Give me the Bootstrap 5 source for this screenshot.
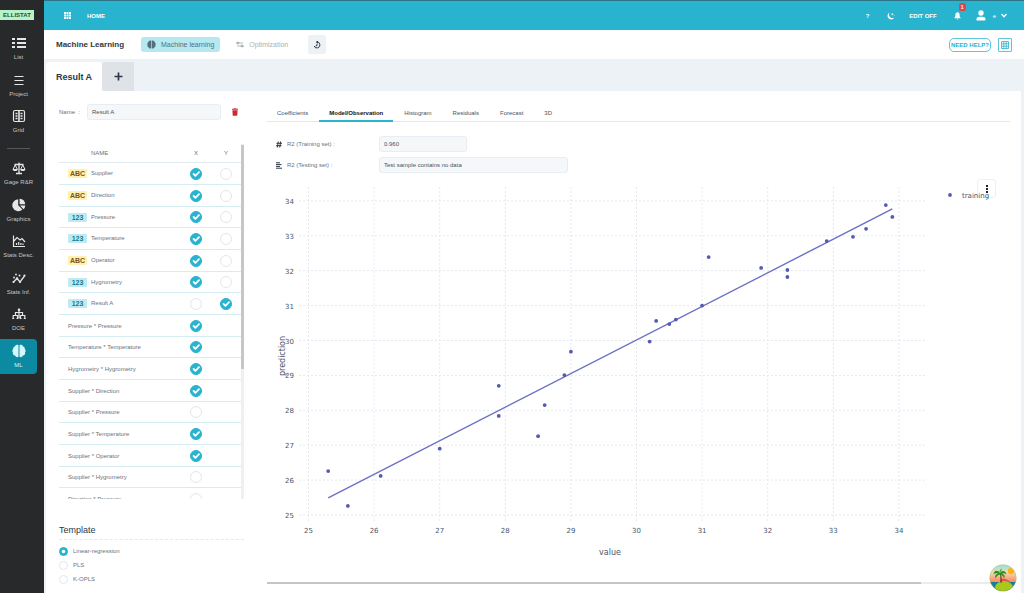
<!DOCTYPE html>
<html lang="en">
<head>
<meta charset="utf-8">
<meta name="viewport" content="width=device-width, initial-scale=1">
<title>Ellistat - Machine Learning</title>
<link href="https://cdn.jsdelivr.net/npm/bootstrap@5.3.0/dist/css/bootstrap.min.css" rel="stylesheet">
<style>
:root{--brand:#28b3cf;--band:#edf2f7;--ink:#2d3748;--soft:#6b7280;--line:#e2e8f0}
body{font-family:"Liberation Sans",Arial,sans-serif;font-size:6px;line-height:8px;color:var(--soft);background:var(--band)}
svg{display:block;flex:none}
a{color:inherit;text-decoration:none}
button{font-family:inherit;line-height:8px}
.side{width:44px;flex:none;background:#27292b;color:#c4c6c8;padding-right:7px}
.brand{width:34px;height:10px;margin-top:10px;background:#b6f3c9;color:#2b4a38;font-weight:700;line-height:11px;text-align:center}
.menu{display:grid;grid-auto-rows:1fr;list-style:none;margin:0;padding:0}
.menu-top{height:110px;margin-top:11px}
.menu-low{height:219px;margin-top:7px}
.menu a{display:flex;flex-direction:column;align-items:center;justify-content:center;gap:3px;height:35px;color:inherit;white-space:nowrap}
.menu a.on{background:#0b8aa2;border-radius:0 4px 4px 0;color:#d5f1f6}
.menu svg{width:14px;height:14px;color:#e6e6e6}
.menu a.on svg{color:#d5f6fb}
.rule{width:23px;height:1px;background:#55585a;margin:7px auto 0}
.topbar{height:30px;background:var(--brand);border-top:1px solid #2c7486;color:#fff;font-weight:700;padding:0 17px 0 20px}
.topbar .end{margin-left:auto}
.count{position:absolute;left:5px;top:-9px;width:7px;height:8px;border-radius:2px;background:#e0454b;font-size:5px;line-height:8px;text-align:center}
.subbar{height:29px;background:#fff;padding:0 12px}
.subbar h1{font-size:8px;line-height:10px;font-weight:700;color:var(--ink);margin:0 17px 0 0;white-space:nowrap}
.mode{height:15px;border:0;border-radius:3px;padding:0 6px;font-size:7px;background:none;color:#a9afb8;display:flex;align-items:center;gap:5px}
.mode.on{background:#b5e8f0;color:#54717b}
.hist{width:18px;height:19px;border:0;border-radius:2px;background:var(--band);color:var(--ink);padding:0;display:grid;place-items:center}
.help{height:14px;border:1px solid #5fc6db;border-radius:5px;background:#fff;color:var(--brand);font-weight:700;padding:0;width:42px;font-size:6px;white-space:nowrap;display:grid;place-items:center}
.gridbtn{width:14px;height:14px;border:1px solid #5fc6db;border-radius:1px;background:#fff;color:var(--brand);padding:0;display:grid;place-items:center}
.pages{height:32px;padding:3px 0 0 2px}
.page-on,.page-add{border:0;height:29px;border-radius:3px 3px 0 0;color:var(--ink);font-size:9px;font-weight:700;white-space:nowrap}
.page-on{background:#fff;width:56px;padding:0}
.page-add{background:#dfe3e8;width:32px;padding:0;display:grid;place-items:center;border-radius:3px 0 0 3px}
.sheet{background:#fff;margin:0 3px 0 2px;padding:13px 11px 0 13px}
.left{width:185px;flex:none}
.box{height:16px;border:1px solid #e6edf4;border-radius:3px;background:#f6f7f8;color:#4a5260;font-size:6px;line-height:8px;padding:0 4px;min-width:0}
.lst{height:355px;margin-top:24px;overflow:hidden}
.vars{width:182px;color:var(--soft);border-collapse:separate;border-spacing:0}
.vars th{height:19px;font-weight:400;padding:0;border-bottom:1px solid #dfeaf1;text-align:center}
.vars th:first-child{text-align:left;padding-left:32px}
.vars td{height:22px;padding:0;border-bottom:1px solid #d3edf2}
.vars tr:nth-child(3n) td{height:21px}
.vars td:first-child{padding-left:9px}
.vars .pick{width:30px}
.tag{display:inline-block;width:19px;height:9px;border-radius:1px;margin-right:4px;font-size:7px;line-height:10px;font-weight:700;text-align:center;vertical-align:middle}
.tag-abc{background:#fdf3ae;color:#80501c}
.tag-num{background:#bcebf4;color:#1d7888}
.form-check-input{margin:0;float:none;display:block;border:1px solid #e0e7ef;background-color:#fff}
.form-check-input:checked{background-color:var(--brand);border-color:var(--brand)}
.pick .form-check-input{width:12px;height:12px;border-radius:50%;margin:0 auto}
.pick .form-check-input:checked{background-size:12px 12px;background-repeat:no-repeat;background-position:center}
.bar-y{width:3px;background:#f0f0f0}
.bar-y div{height:224px;background:#c6c6c6;margin-top:1px}
.tpl{font-size:9px;line-height:12px;color:var(--ink);font-weight:400;margin:25px 0 4px;padding-bottom:3px;border-bottom:1px dashed #e5e8ec}
.opt{height:14px;gap:5px}
.opt .form-check-input{width:9px;height:9px}
.right{min-width:0;margin-left:23px}
.views{height:18px;border-bottom:1px solid var(--line);gap:1px}
.views button{border:0;background:none;padding:0 10px;height:18px;font-size:6px;color:#4a5260;white-space:nowrap}
.views button.on{font-weight:700;color:#111;border-bottom:2px solid var(--brand);padding-top:1px}
.score{height:16px;padding-left:9px;margin-bottom:5px}
.score label{width:92px;margin-left:5px;white-space:nowrap}
.score + .chart{margin-top:-2px}
.w-short{width:88px}.w-long{width:189px}
.chart svg{width:100%;height:auto;font-family:"DejaVu Sans",Verdana,sans-serif;font-size:7px;fill:#4a5568}
#plot{position:relative;z-index:1;pointer-events:none}
.more{right:14px;top:3px;width:19px;height:19px;border:1px solid #edf1f5;border-radius:3px;background:none;padding:0;display:grid;place-items:center}
.bar-x{height:2px;background:#ececec;margin-top:6px}
.bar-x div{height:2px;width:88%;background:#c4c6c6}
.island{position:fixed;right:7px;bottom:1px;z-index:2}
</style>
</head>
<body>
<div class="d-flex min-vh-100">
  <nav class="side" aria-label="Modules">
    <div class="brand">ELLISTAT</div>
    <ul class="menu menu-top">
      <li><a href="#"><svg viewBox="0 0 14 14" fill="currentColor"><path d="M0 2h3v2H0zM5 2h9v2H5zM0 6h3v2H0zM5 6h9v2H5zM0 10h3v2H0zM5 10h9v2H5z"/></svg>List</a></li>
      <li><a href="#"><svg viewBox="0 0 14 14" stroke="currentColor"><path d="M2.500 3.500h9M2.500 7.500h9M2.500 11.500h9"/></svg>Project</a></li>
      <li><a href="#"><svg viewBox="0 0 14 14" fill="none" stroke="currentColor" stroke-width="1.200"><rect x="1.500" y="1.500" width="11" height="11" rx="1.500"/><path d="M7 2v10M3.500 4.500h2M3.500 7h2M3.500 9.500h2M8.500 4.500h2M8.500 7h2M8.500 9.500h2" stroke-width="1.600"/></svg>Grid</a></li>
    </ul>
    <div class="rule"></div>
    <ul class="menu menu-low">
      <li><a href="#"><svg viewBox="0 0 14 14" fill="none" stroke="currentColor"><path d="M7 1.500v10.500M4 12.500h6M2.500 3.500h9" stroke-width="1.300"/><path d="M3.200 4L1 8.500h4.400zM10.800 4L8.600 8.500H13z"/><path d="M.7 8.500h5c-.4 2-4.600 2-5 0zM8.300 8.500h5c-.4 2-4.600 2-5 0z" fill="currentColor" stroke="none"/></svg>Gage R&amp;R</a></li>
      <li><a href="#"><svg viewBox="0 0 14 14" fill="currentColor"><path d="M6.200 1.200v6.100l4.200 4.300A6 6 0 1 1 6.200 1.200z"/><path d="M7.600.8a6 6 0 0 1 5.600 5.500H7.600zM8 7.500h5.300a6 6 0 0 1-1.700 3.700z"/></svg>Graphics</a></li>
      <li><a href="#"><svg viewBox="0 0 14 14" fill="none" stroke="currentColor" stroke-width="1.200"><path d="M1.500 1.500v11H13M2 7l3-3.500L8 6l2-1.500L13 8M4.500 11V9M6.700 11V8M8.900 11V9M11 11V9.500"/></svg>Stats Desc.</a></li>
      <li><a href="#"><svg viewBox="0 0 14 14" fill="none" stroke="currentColor" stroke-width="1.300"><path d="M1.500 11L5 7.500l3 3.500 4.500-6"/><g fill="currentColor" stroke="none"><circle cx="2" cy="6.500" r=".9"/><circle cx="4" cy="3.500" r=".9"/><circle cx="7.500" cy="4.500" r="1"/><circle cx="12.500" cy="4.500" r="1.100"/><circle cx="5" cy="7.500" r="1.200"/><circle cx="1.500" cy="11" r="1.100"/><circle cx="8" cy="11" r="1.100"/></g></svg>Stats Inf.</a></li>
      <li><a href="#"><svg viewBox="0 0 14 14" fill="none" stroke="currentColor" stroke-width="1.200"><path d="M7 3v8M3.500 8V5.500h7V8M1.200 11V8.500h4.300V11M8.500 11V8.500h4.300V11"/><circle cx="7" cy="2.700" r="1.300" fill="currentColor" stroke="none"/><path d="M.2 11.500h2M4.500 11.500h2M7.500 11.500h2M11.800 11.500h2"/></svg>DOE</a></li>
      <li><a href="#" class="on"><svg viewBox="0 0 14 14" fill="currentColor"><path d="M6.500 1.200v11.600c-1.500.9-3.200 0-3.500-1.200C1.300 11.300.5 9.800 1 8.500c-1-1-.8-2.700.2-3.500-.2-1.300.7-2.300 1.700-2.500C3.200.8 5.500.2 6.500 1.200zM7.500 1.200v11.600c1.500.9 3.200 0 3.500-1.200 1.700-.3 2.500-1.800 2-3.100 1-1 .8-2.700-.2-3.500.2-1.300-.7-2.300-1.700-2.500C10.800.8 8.500.2 7.500 1.200z"/></svg>ML</a></li>
    </ul>
  </nav>

  <div class="flex-fill d-flex flex-column" style="min-width:0">
    <header class="topbar d-flex align-items-center">
      <a href="#" aria-label="Applications"><svg width="7" height="7" viewBox="0 0 7 7" fill="#fff"><path d="M0 0h2v2H0zM2.500 0h2v2h-2zM5 0h2v2H5zM0 2.500h2v2H0zM2.500 2.500h2v2h-2zM5 2.500h2v2H5zM0 5h2v2H0zM2.500 5h2v2h-2zM5 5h2v2H5z"/></svg></a>
      <a href="#" class="ms-3">HOME</a>
      <a href="#" class="end">?</a>
      <a href="#" aria-label="Dark mode" style="margin-left:18px"><svg width="8" height="8" viewBox="0 0 8 8" fill="#fff"><path d="M2.800.5A3.600 3.600 0 1 0 7.400 5.400 3.400 3.400 0 0 1 2.800.5z"/><path d="M5.300.8l.4 1 1 .4-1 .4-.4 1-.4-1-1-.4 1-.4zM7.200 2.900l.2.500.5.2-.5.200-.2.500-.2-.5-.5-.2.500-.2z"/></svg></a>
      <a href="#" style="margin-left:14px">EDIT OFF</a>
      <a href="#" class="position-relative" aria-label="Notifications" style="margin-left:17px"><svg width="7" height="8" viewBox="0 0 7 8" fill="#fff"><path d="M3.500.3c1.700.2 2.100 1.400 2.100 2.600 0 1.500.4 2.100 1 2.800v.5H.4v-.5c.6-.7 1-1.300 1-2.800 0-1.200.4-2.400 2.100-2.600zM2.600 6.700h1.800c-.2 1-1.600 1-1.800 0z"/></svg><span class="count">1</span></a>
      <a href="#" class="d-flex align-items-center fw-normal" style="margin-left:15px"><svg width="10" height="11" viewBox="0 0 10 11" fill="#fff"><circle cx="5" cy="3" r="2.700"/><path d="M.5 10.600V9c0-1.500 1.400-2.200 3-2.200h3c1.600 0 3 .7 3 2.200 0 1-.5 1.600-1.500 1.600z"/></svg><span style="margin:0 5px 0 7px">e</span><svg width="6" height="5" viewBox="0 0 6 5" fill="none" stroke="#fff" stroke-width="1.300"><path d="M.5 1L3 3.700 5.500 1"/></svg></a>
    </header>

    <div class="subbar d-flex align-items-center">
      <h1>Machine Learning</h1>
      <button class="mode on" type="button"><svg width="9" height="9" viewBox="0 0 14 14" fill="currentColor"><path d="M6.500 1.200v11.600c-1.500.9-3.200 0-3.500-1.200C1.300 11.300.5 9.800 1 8.500c-1-1-.8-2.700.2-3.500-.2-1.300.7-2.300 1.700-2.500C3.200.8 5.500.2 6.500 1.200zM7.500 1.200v11.600c1.500.9 3.200 0 3.500-1.200 1.700-.3 2.500-1.800 2-3.100 1-1 .8-2.700-.2-3.500.2-1.300-.7-2.300-1.700-2.500C10.800.8 8.500.2 7.500 1.200z"/></svg>Machine learning</button>
      <button class="mode" type="button" style="margin-left:10px"><svg width="8" height="7" viewBox="0 0 8 7" stroke="currentColor" fill="currentColor" stroke-width=".9"><path d="M0 2h7M1 5h7"/><circle cx="2" cy="2" r="1"/><circle cx="6" cy="5" r="1"/></svg>Optimization</button>
      <button class="hist" type="button" aria-label="History" style="margin-left:14px"><svg width="8" height="8" viewBox="0 0 8 8" fill="none" stroke="currentColor"><path d="M3.500 1a3 3 0 1 1-2.400 4M4 2.800v1.700l-1.400.6M5 .2L3.500 1.100 5 2.200"/></svg></button>
      <button class="help ms-auto" type="button">NEED HELP?</button>
      <button class="gridbtn" type="button" aria-label="Data grid" style="margin-left:7px"><svg width="8" height="8" viewBox="0 0 8 8" fill="none" stroke="currentColor" stroke-width=".8"><path d="M.5.5h7v7h-7zM.5 2.800h7M.5 5.200h7M2.800.5v7M5.200.5v7"/></svg></button>
    </div>

    <div class="pages d-flex">
      <button class="page-on" type="button">Result A</button>
      <button class="page-add" type="button" aria-label="Add result"><svg width="9" height="9" viewBox="0 0 9 9" stroke="currentColor" stroke-width="1.700"><path d="M4.500.5v8M.5 4.500h8"/></svg></button>
    </div>

    <main class="sheet d-flex flex-fill">
      <section class="left">
        <div class="d-flex align-items-center">
          <label for="rname" style="width:28px">Name&nbsp; :</label>
          <input id="rname" class="box flex-fill" value="Result A">
          <button type="button" class="border-0 bg-transparent p-0" aria-label="Delete" style="margin:0 6px 0 11px"><svg width="6" height="8" viewBox="0 0 6 8" fill="#cf2a2f"><path d="M0 .8h1.700L2.100.2h1.800l.4.600H6v.9H0zM.4 2.200h5.200L5.300 7.200c0 .4-.3.600-.6.600H1.300c-.3 0-.6-.2-.6-.6z"/></svg></button>
        </div>
        <div class="lst d-flex">
          <table class="vars flex-shrink-0">
            <thead><tr><th>NAME</th><th class="pick">X</th><th class="pick">Y</th></tr></thead>
            <tbody id="vars"></tbody>
          </table>
          <div class="bar-y"><div></div></div>
        </div>
        <h2 class="tpl">Template</h2>
        <div class="opt d-flex align-items-center"><input class="form-check-input" type="radio" name="tpl" id="t1" checked><label for="t1">Linear-regression</label></div>
        <div class="opt d-flex align-items-center"><input class="form-check-input" type="radio" name="tpl" id="t2"><label for="t2">PLS</label></div>
        <div class="opt d-flex align-items-center"><input class="form-check-input" type="radio" name="tpl" id="t3"><label for="t3">K-OPLS</label></div>
      </section>

      <section class="right flex-fill">
        <div class="views d-flex">
          <button type="button">Coefficients</button>
          <button type="button" class="on">Model/Observation</button>
          <button type="button">Histogram</button>
          <button type="button">Residuals</button>
          <button type="button">Forecast</button>
          <button type="button">3D</button>
        </div>
        <div class="score d-flex align-items-center" style="margin-top:14px">
          <svg width="6" height="7" viewBox="0 0 6 7" fill="none" stroke="#2d3748"><path d="M2.300.5L1.300 6.500M4.700.5l-1 6M.5 2.300H6M0 4.700h5.500"/></svg>
          <label for="r2a">R2 (Training set) :</label><input id="r2a" class="box w-short" value="0.960" readonly>
        </div>
        <div class="score d-flex align-items-center">
          <svg width="6" height="7" viewBox="0 0 6 7" stroke="#2d3748"><path d="M0 .8h4M0 2.600h5.500M0 4.400h4M0 6.200h6"/></svg>
          <label for="r2b">R2 (Testing set) :</label><input id="r2b" class="box w-long" value="Test sample contains no data" readonly>
        </div>
        <div class="chart position-relative">
          <svg id="plot" viewBox="0 0 743 400" role="img" aria-label="Prediction against value"></svg>
          <button class="more position-absolute" type="button" aria-label="Chart menu"><svg style="width:2px" viewBox="0 0 2 8"><path fill="#222" d="M0 0h2v2H0zM0 3h2v2H0zM0 6h2v2H0z"/></svg></button>
        </div>
        <div class="bar-x"><div></div></div>
      </section>
    </main>
  </div>
</div>

<a href="#" class="island" aria-label="Assistant"><svg width="28" height="28" viewBox="0 0 28 28">
  <defs><clipPath id="disc"><circle cx="14" cy="14" r="13"/></clipPath><linearGradient id="sky" x1="0" y1="0" x2="0" y2="1"><stop offset="0" stop-color="#8ae0e6"/><stop offset=".3" stop-color="#e9dfae"/><stop offset=".6" stop-color="#ff8f6a"/></linearGradient></defs>
  <circle cx="14" cy="14" r="13.500" fill="#a9c46a"/>
  <g clip-path="url(#disc)"><path fill="url(#sky)" d="M0 0h28v28H0z"/><circle cx="22" cy="7" r="3.200" fill="#ffae1c"/><path d="M0 18h28v10H0z" fill="#147f9b"/>
  <path d="M12 15c3-1 8 1 9 3h-9z" fill="#e2524a"/><ellipse cx="15" cy="23.500" rx="9" ry="6.500" fill="#a8c81b"/><path d="M10.500 9c1 3 1 6 .5 9.500h2c0-4-.5-7-1.500-9.500z" fill="#7c4a25"/>
  <path d="M11 9C9 5.500 5 6.500 4.500 10 6 9 8 9 9 9.500 6.500 10 5.500 12 6.500 14.500 7.500 12 9 11 11 10.500c2 .5 3.500 1.500 4 4 1.500-2.500 0-4.500-2-5 1.500-.5 3-.2 4.500.8C17 7 13.500 5.500 11 9z" fill="#2f8d25"/><path d="M11 9c-1-2 0-4 2-4.200C12.500 6 12 7.500 11 9z" fill="#3ea82c"/></g>
</svg></a>

<script src="https://cdn.jsdelivr.net/npm/bootstrap@5.3.0/dist/js/bootstrap.bundle.min.js"></script>
<script>
// Model terms: [name, type, X selected, Y selected]
const terms = [
  ['Supplier','ABC',1,0],['Direction','ABC',1,0],['Pressure','123',1,0],['Temperature','123',1,0],
  ['Operator','ABC',1,0],['Hygrometry','123',1,0],['Result A','123',0,1],
  ['Pressure * Pressure','',1],['Temperature * Temperature','',1],['Hygrometry * Hygrometry','',1],
  ['Supplier * Direction','',1],['Supplier * Pressure','',0],['Supplier * Temperature','',1],
  ['Supplier * Operator','',1],['Supplier * Hygrometry','',0],['Direction * Pressure','',0]
];
const box = (name, axis, on) => `<input class="form-check-input" type="checkbox" aria-label="${name} ${axis}" ${on ? 'checked' : ''}>`;
document.getElementById('vars').innerHTML = terms.map(([name, type, x, y]) => `<tr>
  <td>${type ? `<span class="tag ${type === 'ABC' ? 'tag-abc' : 'tag-num'}">${type}</span>` : ''}${name}</td>
  <td class="pick">${box(name, 'X', x)}</td><td class="pick">${y === undefined ? '' : box(name, 'Y', y)}</td></tr>`).join('');

// Scatter of predicted against observed values, with the fitted line
const pts = [[25.3,26.26],[25.6,25.26],[26.1,26.12],[27,26.9],[27.9,28.7],[27.9,27.84],[28.5,27.26],[28.6,28.15],
  [28.9,29.01],[29,29.68],[30.2,29.97],[30.3,30.56],[30.5,30.47],[30.6,30.6],[31,31],[31.1,32.39],[31.9,32.08],
  [32.3,32.02],[32.3,31.82],[32.9,32.85],[33.3,32.97],[33.5,33.2],[33.8,33.88],[33.9,33.54]];
const X = v => 41.5 + (v - 25) * 65.6, Y = v => 339 - (v - 25) * 34.9;
let s = '<g stroke="#e4e9f0" stroke-dasharray="2 2">';
for (let v = 25; v <= 34; v++) s += `<path d="M${X(v)} 11V347M32 ${Y(v)}H659"/>`;
s += '</g>';
for (let v = 25; v <= 34; v++) s += `<text x="${X(v)}" y="357" text-anchor="middle">${v}</text><text x="27" y="${Y(v) + 3}" text-anchor="end">${v}</text>`;
s += `<path d="M${X(25.3)} ${Y(25.49)}L${X(33.9)} ${Y(33.77)}" stroke="#6a70c4" stroke-width="1.400"/>`;
for (const [a, b] of pts) s += `<circle cx="${X(a)}" cy="${Y(b)}" r="1.900" fill="#545ab4"/>`;
s += '<text x="343" y="379" text-anchor="middle" style="font-size:8px">value</text>' +
  '<text transform="translate(18 180) rotate(-90)" text-anchor="middle" style="font-size:8px">prediction</text>' +
  '<circle cx="683" cy="19" r="1.900" fill="#545ab4"/><text x="695" y="22">training</text>';
document.getElementById('plot').innerHTML = s;
</script>
</body>
</html>
